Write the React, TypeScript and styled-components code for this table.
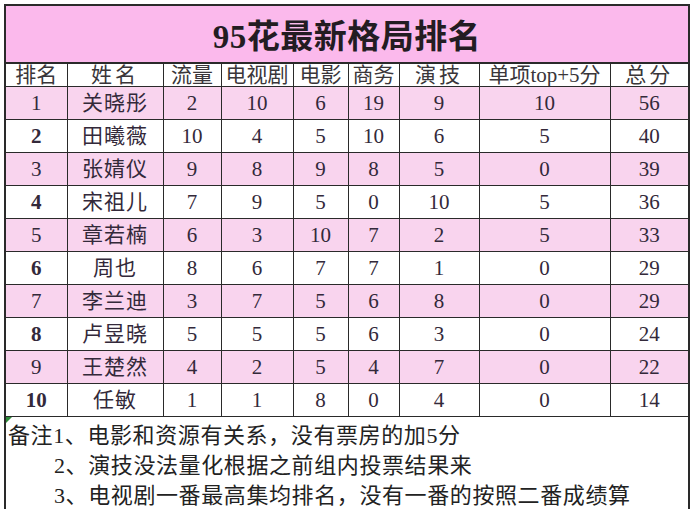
import React from 'react'
import styled, { createGlobalStyle } from 'styled-components'

const GlobalStyle = createGlobalStyle`
  html, body {
    margin: 0;
    padding: 0;
    background: #fff;
  }
  body {
    font-family: "Liberation Serif", "Noto Sans CJK SC", serif;
    color: #2f2830;
  }
`

const Page = styled.div`
  width: 690px;
  height: 509px;
  overflow: hidden;
  padding: 4px 0 0 4px;
  box-sizing: border-box;
  background: #fff;
`

const Sheet = styled.table`
  border-collapse: collapse;
  table-layout: fixed;
  width: 684px;
  border: 2px solid #2a2a2a;
  border-bottom: none;
`

const TitleCell = styled.td`
  height: 56px;
  padding: 0;
  background: #fbb9ec;
  border: 2px solid #2a2a2a;
  text-align: center;
  font-size: 33px;
  font-weight: bold;
  color: #231c22;
  letter-spacing: 0.5px;
`

const HeadRow = styled.tr`
  height: 23px;
`

const HeadCell = styled.td<{ $wide?: boolean }>`
  padding: 0;
  border: 1px solid #2a2a2a;
  text-align: center;
  font-size: 21px;
  line-height: 20px;
  color: #3a363a;
  white-space: nowrap;
  overflow: hidden;
  letter-spacing: ${(p) => (p.$wide ? '3px' : '0')};
`

const DataRow = styled.tr<{ $pink: boolean }>`
  height: 33px;
  background: ${(p) => (p.$pink ? '#f9d4ee' : '#ffffff')};
`

const Cell = styled.td<{ $bold?: boolean; $name?: boolean }>`
  padding: 0;
  border: 1px solid #2a2a2a;
  text-align: center;
  font-size: 21px;
  font-weight: ${(p) => (p.$bold ? 'bold' : 'normal')};
  letter-spacing: ${(p) => (p.$name ? '1px' : '0')};
  line-height: 24px;
  color: #33293a;
`

const NoteCell = styled.td`
  position: relative;
  padding: 4px 0 0 2px;
  border: none;
  border-top: 1px solid #2a2a2a;
  border-left: 2px solid #2a2a2a;
  border-right: 2px solid #2a2a2a;
  vertical-align: top;
  &::before {
    content: '';
    position: absolute;
    left: 0;
    top: 0;
    border-top: 6px solid #2e8b3a;
    border-right: 6px solid transparent;
  }
`

const NoteLine = styled.div<{ $indent?: boolean }>`
  font-size: 22px;
  line-height: 30px;
  height: 30px;
  color: #222;
  white-space: nowrap;
  letter-spacing: 0.6px;
  padding-left: ${(p) => (p.$indent ? '46px' : '0')};
`

const widths = [62, 96, 58, 72, 55, 51, 80, 131, 79]

const headers = ['排名', '姓名', '流量', '电视剧', '电影', '商务', '演技', '单项top+5分', '总分']

const rows: [number, string, number, number, number, number, number, number, number][] = [
  [1, '关晓彤', 2, 10, 6, 19, 9, 10, 56],
  [2, '田曦薇', 10, 4, 5, 10, 6, 5, 40],
  [3, '张婧仪', 9, 8, 9, 8, 5, 0, 39],
  [4, '宋祖儿', 7, 9, 5, 0, 10, 5, 36],
  [5, '章若楠', 6, 3, 10, 7, 2, 5, 33],
  [6, '周也', 8, 6, 7, 7, 1, 0, 29],
  [7, '李兰迪', 3, 7, 5, 6, 8, 0, 29],
  [8, '卢昱晓', 5, 5, 5, 6, 3, 0, 24],
  [9, '王楚然', 4, 2, 5, 4, 7, 0, 22],
  [10, '任敏', 1, 1, 8, 0, 4, 0, 14],
]

const notes = [
  '备注1、电影和资源有关系，没有票房的加5分',
  '2、演技没法量化根据之前组内投票结果来',
  '3、电视剧一番最高集均排名，没有一番的按照二番成绩算',
]

function App() {
  return (
    <Page>
      <GlobalStyle />
      <Sheet>
        <colgroup>
          {widths.map((w, i) => (
            <col key={i} style={{ width: w }} />
          ))}
        </colgroup>
        <tbody>
          <tr>
            <TitleCell colSpan={9}>95花最新格局排名</TitleCell>
          </tr>
          <HeadRow>
            {headers.map((h) => (
              <HeadCell key={h} $wide={h === '姓名' || h === '演技' || h === '总分'}>
                {h}
              </HeadCell>
            ))}
          </HeadRow>
          {rows.map((r, i) => (
            <DataRow key={r[0]} $pink={i % 2 === 0}>
              {r.map((v, j) => (
                <Cell key={j} $bold={j === 0 && r[0] % 2 === 0} $name={j === 1}>
                  {v}
                </Cell>
              ))}
            </DataRow>
          ))}
          <tr>
            <NoteCell colSpan={9}>
              {notes.map((n, i) => (
                <NoteLine key={i} $indent={i > 0}>
                  {n}
                </NoteLine>
              ))}
            </NoteCell>
          </tr>
        </tbody>
      </Sheet>
    </Page>
  )
}

export default App
